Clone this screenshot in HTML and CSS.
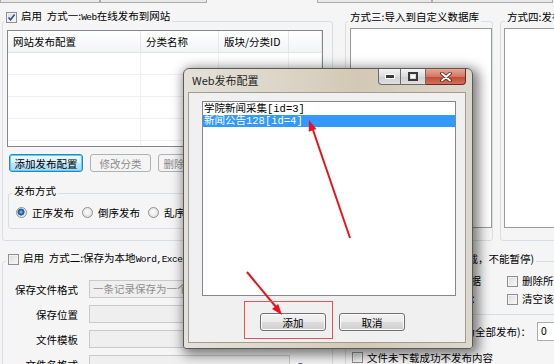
FILE: index.html
```html
<!DOCTYPE html>
<html lang="zh-CN">
<head>
    <meta charset="UTF-8">
    <title>Web发布配置</title>
    <link rel="stylesheet" href="styles.css">
</head>
<body>
    <div class="topStrip">
        <span class="stripBtn" style="width:100px"></span>
        <span class="stripBtn" style="width:107px"></span>
        <span class="stripGap"></span>
        <span class="stripBtn" style="width:115px"></span>
        <span class="stripBtn" style="width:121px"></span>
    </div>

    <div id="app">
        <div class="leftCol">
            <div class="group group1">
                <div class="groupTitle">
                    <span class="check"><svg width="9" height="9" viewBox="0 0 9 9"><path d="M1.5 4.5 L3.6 6.8 L7.6 1.6" fill="none" stroke="#2b4e8c" stroke-width="1.6"/></svg></span>
                    <span>启用&nbsp;&nbsp;方式一:<span class="small">Web</span>在线发布到网站</span>
                </div>
                <div class="listView">
                    <div class="lvHeader">
                        <span>网站发布配置</span>
                        <span>分类名称</span>
                        <span>版块/分类ID</span>
                        <span></span>
                    </div>
                    <div class="lvRow"><span></span><span></span><span></span><span></span></div>
                    <div class="lvRow"><span></span><span></span><span></span><span></span></div>
                    <div class="lvRow"><span></span><span></span><span></span><span></span></div>
                    <div class="lvRow"><span></span><span></span><span></span><span></span></div>
                    <div class="lvRow"><span></span><span></span><span></span><span></span></div>
                </div>
                <div class="btnRow">
                    <button class="btn focus" style="width:74px">添加发布配置</button>
                    <button class="btn" style="width:61px" disabled>修改分类</button>
                    <button class="btn" style="width:74px" disabled>删除发布配置</button>
                </div>
                <div class="group modeGroup">
                    <div class="groupTitle">发布方式</div>
                    <div class="radioRow">
                        <label class="radioItem"><span class="radio on"></span>正序发布</label>
                        <label class="radioItem"><span class="radio"></span>倒序发布</label>
                        <label class="radioItem"><span class="radio"></span>乱序发布</label>
                    </div>
                </div>
            </div>

            <div class="group group2">
                <div class="groupTitle">
                    <span class="check"></span>
                    <span>启用&nbsp;&nbsp;方式二:保存为本地<span class="small">Word,Excel,Html,Txt</span>等文件</span>
                </div>
                <div class="formGrid">
                    <span class="formLabel">保存文件格式</span>
                    <div class="field combo">一条记录保存为一个文件</div>
                    <span class="formLabel">保存位置</span>
                    <div class="field"></div>
                    <span class="formLabel">文件模板</span>
                    <div class="field"></div>
                    <span class="formLabel">文件名格式</span>
                    <div class="fieldWrap">
                        <div class="field"></div>
                        <span class="thumb"></span>
                    </div>
                </div>
            </div>
        </div>

        <div class="rightCol">
            <div class="topRight">
                <div class="group group3">
                    <div class="groupTitle">方式三:导入到自定义数据库</div>
                    <div class="whiteBox"></div>
                </div>
                <div class="group group4">
                    <div class="groupTitle">方式四:发布到本地网站</div>
                    <div class="whiteBox"></div>
                </div>
            </div>
            <div class="group group5">
                <div class="groupTitle">同步发布（采集时下载，不能暂停)</div>
                <div class="optGrid">
                    <span class="formLabel">发布前清理已有数据</span>
                    <label class="checkItem"><span class="check"></span>删除所有已发布记录</label>
                    <span class="formLabel">发布完成后：</span>
                    <label class="checkItem"><span class="check"></span>清空该任务数据</label>
                </div>
                <div class="sep"></div>
                <div class="countRow">
                    <span class="formLabel">每次发布数量(0为全部发布)：</span>
                    <div class="field num">0</div>
                </div>
                <label class="checkItem lastCheck"><span class="check"></span>文件未下载成功不发布内容</label>
            </div>
        </div>
    </div>

    <div class="dialog">
        <div class="dlgTitle">
            <span class="dlgText">Web发布配置</span>
            <div class="capBtns">
                <span class="capBtn minBtn"><svg width="10" height="5" viewBox="0 0 10 5"><rect x="0.5" y="0.5" width="9" height="4" fill="#3a3a3a" stroke="#fff" stroke-width="1"/></svg></span>
                <span class="capBtn maxBtn"><svg width="10" height="9" viewBox="0 0 10 9"><rect x="1" y="1" width="8" height="7" fill="none" stroke="#3a3a3a" stroke-width="2"/><rect x="3" y="3.5" width="4" height="2.5" fill="#fff"/></svg></span>
                <span class="capBtn closeBtn"><svg width="12" height="10" viewBox="0 0 12 10"><path d="M2 1.5 L10 8.5 M10 1.5 L2 8.5" stroke="#5a1c14" stroke-width="3.6" stroke-linecap="round"/><path d="M2 1.5 L10 8.5 M10 1.5 L2 8.5" stroke="#fff" stroke-width="2" stroke-linecap="round"/></svg></span>
            </div>
        </div>
        <div class="dlgClient">
            <div class="listBox">
                <div class="lbItem">学院新闻采集[id=3]</div>
                <div class="lbItem selected">新闻公告128[id=4]</div>
            </div>
            <div class="dlgBtns">
                <button class="btn dlgBtn">添加</button>
                <button class="btn dlgBtn">取消</button>
            </div>
        </div>
    </div>

    <svg class="marks" width="554" height="364" viewBox="0 0 554 364">
        <!-- 标注：箭头和红框 -->
        <line x1="350" y1="238" x2="313" y2="130" stroke="#e8141c" stroke-width="2"/>
        <polygon points="309,120 316.4,129.1 308.8,131.7" fill="#e8141c"/>
        <line x1="247" y1="272" x2="276" y2="307" stroke="#e8141c" stroke-width="2"/>
        <polygon points="282,315 278.2,303.9 272,309" fill="#e8141c"/>
        <rect x="244.5" y="301.5" width="88" height="37" fill="none" stroke="#e25555" stroke-width="1"/>
    </svg>
</body>
</html>
```

FILE: styles.css
```css
* {
    box-sizing: border-box;
}
body {
    margin: 0;
    width: 554px;
    height: 364px;
    overflow: hidden;
    position: relative;
    background: #f5f5f5;
    font-family: "Noto Sans CJK SC", sans-serif;
    font-size: 10.5px;
    color: #000;
}
.small {
    font-family: "Liberation Mono", monospace;
    font-size: 9.5px;
    letter-spacing: -0.5px;
}

.topStrip {
    display: flex;
    height: 3px;
}
.stripBtn {
    height: 3px;
    border: 1px solid #acacac;
    border-top: none;
    background: #e9e9e9;
}
.stripGap {
    width: 110px;
}

#app {
    display: flex;
    margin-top: 18px;
    padding-left: 2px;
}
.leftCol {
    width: 331px;
    flex: none;
    display: flex;
    flex-direction: column;
}
.rightCol {
    margin-left: 12px;
    width: 220px;
    flex: none;
    display: flex;
    flex-direction: column;
}

.group {
    border: 1px solid #d5dfe5;
    border-radius: 3px;
    display: flex;
    flex-direction: column;
    align-items: flex-start;
}
.groupTitle {
    display: flex;
    align-items: center;
    gap: 4px;
    height: 14px;
    line-height: 14px;
    margin: -12px 0 0 1px;
    padding: 0 2px;
    background: #f5f5f5;
    white-space: nowrap;
}

.check {
    width: 11px;
    height: 11px;
    flex: none;
    border: 1px solid #8e8f8f;
    background: linear-gradient(135deg, #d9d9d9, #fbfbfb);
    box-shadow: inset 0 0 0 1px #f2f2f2;
    display: flex;
    align-items: center;
    justify-content: center;
}
.radio {
    width: 11px;
    height: 11px;
    flex: none;
    border-radius: 50%;
    border: 1px solid #8e8f8f;
    background: radial-gradient(circle at 45% 45%, #ffffff, #d6d6d6);
}
.radio.on {
    background: radial-gradient(circle at 45% 45%, #8fd0ff 0, #2a6db0 2px, #1b4f8a 3.2px, #e8e8e8 3.8px, #fafafa 100%);
}

.group1 {
    height: 220px;
}
.listView {
    margin: 6px 0 0 4px;
    width: 316px;
    height: 117px;
    border: 1px solid #828790;
    background: #fff;
    overflow: hidden;
}
.lvHeader, .lvRow {
    display: grid;
    grid-template-columns: 133px 78px 70px 1fr;
    height: 22px;
}
.lvHeader {
    background: linear-gradient(#ffffff, #f3f4f6);
    border-bottom: 1px solid #e2e3e5;
    line-height: 21px;
}
.lvHeader span {
    border-right: 1px solid #e5e5e5;
    padding-left: 5px;
    white-space: nowrap;
}
.lvRow {
    border-bottom: 1px solid #f0f0f0;
}
.lvRow span {
    border-right: 1px solid #f0f0f0;
}

.btnRow {
    display: flex;
    gap: 7px;
    margin: 7px 0 0 6px;
}
.btn {
    height: 18px;
    padding: 0;
    font: inherit;
    color: #000;
    border: 1px solid #707070;
    border-radius: 3px;
    background: linear-gradient(#f2f2f2 0%, #ebebeb 50%, #dddddd 50%, #cfcfcf 100%);
    box-shadow: inset 0 0 0 1px #fbfbfb;
    white-space: nowrap;
    overflow: hidden;
}
.btn.focus {
    border-color: #3c7fb1;
    box-shadow: inset 0 0 0 1px #48d8fb;
    background: linear-gradient(#eaf6fd 0%, #d9f0fc 50%, #bee6fd 50%, #a7d9f5 100%);
}
.btn:disabled {
    border-color: #adb2b5;
    background: #f4f4f4;
    box-shadow: none;
    color: #8b8b8b;
}

.modeGroup {
    margin: 21px 0 0 5px;
    width: 318px;
    height: 36px;
}
.modeGroup .groupTitle {
    margin: -10px 0 0 3px;
}
.radioRow {
    display: flex;
    margin: 7px 0 0 7px;
    height: 14px;
    align-items: center;
}
.radioItem {
    display: flex;
    align-items: center;
    gap: 5px;
    margin-right: 8px;
}

.group2 {
    margin-top: 20px;
    height: 130px;
}
.group2 .groupTitle {
    margin: -10px 0 0 3px;
}
.formGrid {
    display: grid;
    grid-template-columns: 75px 220px;
    grid-template-rows: 18px 18px 18px 18px;
    column-gap: 11px;
    row-gap: 7px;
    margin-top: 14px;
    align-items: center;
}
.formLabel {
    text-align: right;
    white-space: nowrap;
}
.field {
    width: 201px;
    height: 18px;
    border: 1px solid #c9c9c9;
    background: #efefef;
    line-height: 16px;
    padding-left: 3px;
    color: #8d8d8d;
    white-space: nowrap;
    overflow: hidden;
}
.fieldWrap {
    display: flex;
    align-items: center;
    gap: 8px;
}
.thumb {
    width: 5px;
    height: 8px;
    margin-top: 6px;
    border-radius: 2px;
    background: #4a5a78;
}

.topRight {
    display: flex;
}
.group3 {
    width: 153px;
    height: 220px;
}
.group3 .groupTitle {
    margin-left: 2px;
}
.group4 {
    margin-left: 7px;
    width: 80px;
    height: 220px;
}
.group4 .groupTitle {
    margin-left: 4px;
}
.whiteBox {
    margin: 4px 0 0 3px;
    width: 142px;
    height: 200px;
    background: #fff;
    border: 1px solid #9a9a9a;
}
.group3 .whiteBox {
    margin-left: 4px;
}

.group5 {
    margin-top: 20px;
    height: 120px;
}
.group5 .groupTitle {
    margin: -10px 0 0 25px;
}
.optGrid {
    display: grid;
    grid-template-columns: 135px auto;
    column-gap: 26px;
    row-gap: 4px;
    margin-top: 8px;
}
.optGrid > * {
    height: 14px;
    line-height: 14px;
}
.checkItem {
    display: flex;
    align-items: center;
    gap: 4px;
    white-space: nowrap;
}
.sep {
    margin-top: 8px;
    width: 100%;
    border-top: 1px solid #d5dfe5;
}
.countRow {
    display: grid;
    grid-template-columns: 185px 40px;
    column-gap: 6px;
    margin-top: 7px;
    align-items: center;
}
.field.num {
    width: 40px;
    height: 19px;
    background: #fff;
    color: #000;
    border-color: #abadb3;
}
.lastCheck {
    margin: 9px 0 0 6px;
    height: 14px;
}

.dialog {
    position: absolute;
    left: 183px;
    top: 68px;
    width: 290px;
    height: 281px;
    border: 1px solid #5c5a55;
    border-radius: 6px 6px 3px 3px;
    background: linear-gradient(to right, #e4e1da 0%, #dcd5c7 35%, #d2c8b5 60%, #ddd8ce 100%);
    box-shadow: 3px 3px 12px 3px rgba(0, 0, 0, 0.5);
    display: flex;
    flex-direction: column;
}
.dlgTitle {
    display: flex;
    height: 23px;
    flex: none;
}
.dlgText {
    padding: 4px 0 0 8px;
    font-size: 11px;
    line-height: 15px;
    color: #1e1e1e;
}
.capBtns {
    display: flex;
    margin: 0 6px 0 auto;
}
.capBtn {
    height: 16px;
    display: flex;
    align-items: center;
    justify-content: center;
    border: 1px solid #6b6b6b;
    border-top: none;
}
.minBtn {
    width: 23px;
    border-radius: 0 0 0 4px;
    background: linear-gradient(#f4f4f4, #dcdcdc 50%, #cfcfcf 51%, #e0e0e0);
}
.maxBtn {
    width: 25px;
    border-left: none;
    background: linear-gradient(#f4f4f4, #dcdcdc 50%, #cfcfcf 51%, #e0e0e0);
}
.closeBtn {
    width: 40px;
    border-left: none;
    border-radius: 0 0 4px 0;
    border-color: #6e2a20;
    background: linear-gradient(#e8a897, #d47560 50%, #c04a32 51%, #d3705a);
}
.dlgClient {
    flex: 1;
    margin: 0 6px 5px 4px;
    border: 1px solid #a29d92;
    background: #f0f0f0;
    display: flex;
    flex-direction: column;
    align-items: flex-start;
}
.listBox {
    margin: 8px 0 0 13px;
    width: 254px;
    height: 195px;
    border: 1px solid #828790;
    background: #fff;
    padding-top: 1px;
    font-family: "Liberation Mono", "Noto Sans CJK SC", monospace;
    font-size: 10.5px;
}
.lbItem {
    height: 12px;
    line-height: 12px;
    padding-left: 1px;
    white-space: nowrap;
}
.lbItem.selected {
    background: #3399ff;
    color: #fff;
}
.dlgBtns {
    display: flex;
    gap: 13px;
    margin: 17px 0 0 71px;
}
.dlgBtn {
    width: 66px;
}

.marks {
    position: absolute;
    left: 0;
    top: 0;
    pointer-events: none;
}
```
